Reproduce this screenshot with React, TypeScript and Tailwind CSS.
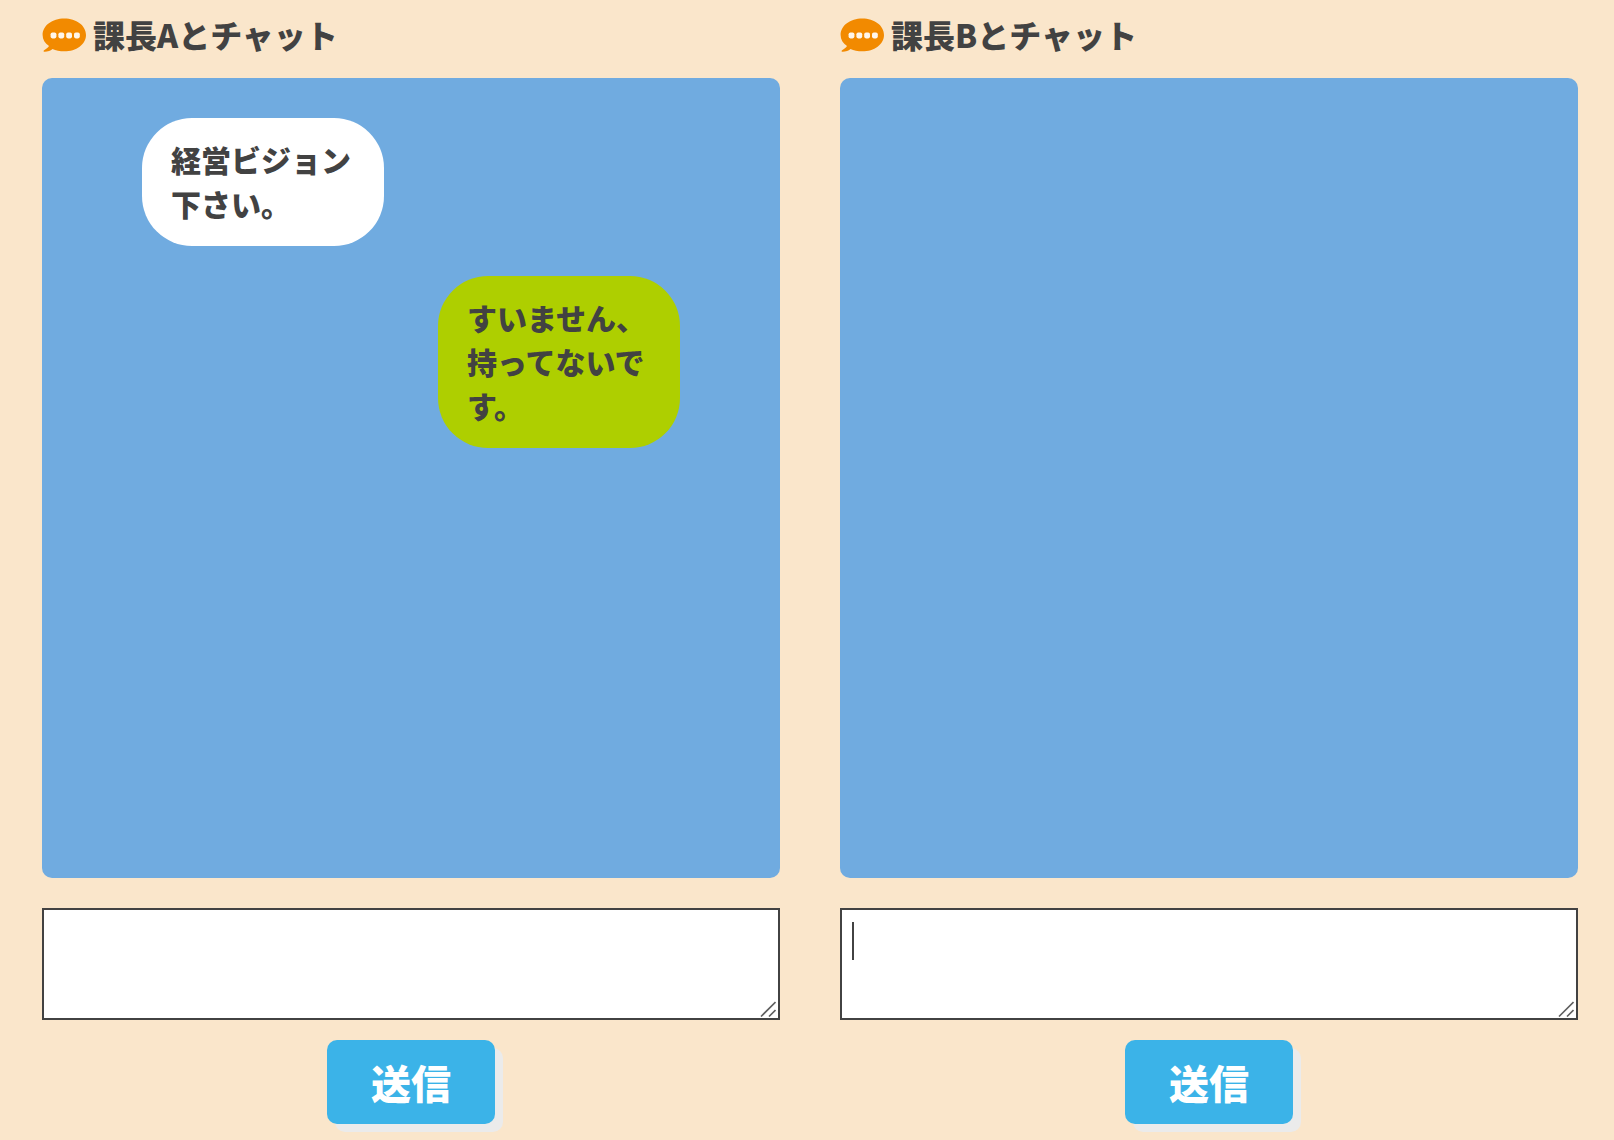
import { useState } from "react";

type Message = { from: "A" | "B"; text: string };

function SpeechIcon() {
  return (
    <svg viewBox="0 0 44 36" className="h-9 w-11 shrink-0" aria-hidden="true">
      <path
        d="M22.300 2.400C34.300 2.400 44 9.400 44 18.900S34.300 35.300 22.300 35.300c-4.400 0-8.600-.8-11.800-2.400-2 1.800-4.900 2.900-8.200 2.800-1 0-1-1-.2-1.500 2-1.100 3.900-2.500 4.900-4.200C2.900 27.300.6 23.400.6 18.900.6 9.400 10.300 2.400 22.300 2.400Z"
        fill="#f28a00"
      />
      <g fill="#fff7ec">
        <rect x="8.600" y="16.400" width="5.800" height="6" rx="1.800" />
        <rect x="16.400" y="16.400" width="5.800" height="6" rx="1.800" />
        <rect x="24.200" y="16.400" width="5.800" height="6" rx="1.800" />
        <rect x="32" y="16.400" width="5.800" height="6" rx="1.800" />
      </g>
    </svg>
  );
}

function ChatPane({
  name,
  messages,
  caret = false,
}: {
  name: "A" | "B";
  messages: Message[];
  caret?: boolean;
}) {
  const [draft, setDraft] = useState("");
  const fieldId = `message-${name}`;

  return (
    <section className="flex min-w-0 flex-1 flex-col">
      <h2 className="flex items-center gap-[7px] text-[32px] leading-[48px] font-black">
        <SpeechIcon />
        <label htmlFor={fieldId}>課長{name}とチャット</label>
      </h2>

      <div className="mt-5 flex min-h-[800px] flex-col gap-[30px] rounded-[10px] bg-[#70abe0] px-[100px] py-10">
        {messages.map((m) => (
          <p
            key={m.text}
            className={
              m.from === "A"
                ? "w-[45%] self-start rounded-[50px] bg-white px-[29px] pt-[19px] pb-[21px] text-[30px] leading-[44px] font-black"
                : "w-[45%] self-end rounded-[50px] bg-[#aecf00] px-[29px] pt-[19px] pb-[21px] text-[30px] leading-[44px] font-black"
            }
          >
            {m.text}
          </p>
        ))}
      </div>

      <div className="relative mt-[30px]">
        <textarea
          id={fieldId}
          value={draft}
          onChange={(e) => setDraft(e.target.value)}
          className="block h-28 w-full resize-none border-2 border-[#424242] bg-white px-2.5 py-2 text-[26px] leading-[44px] outline-none"
        />
        {caret && draft === "" && (
          <span className="pointer-events-none absolute top-3.5 left-3 h-[38px] w-0.5 bg-[#424242]" />
        )}
        <svg
          viewBox="0 0 16 16"
          className="pointer-events-none absolute right-1 bottom-[3px] size-4"
          fill="none"
          stroke="#606060"
          strokeWidth="1.600"
          aria-hidden="true"
        >
          <path d="M1 15.500 15.500 1M9 15.500 15.500 9" />
        </svg>
      </div>

      <button
        type="button"
        className="mt-5 self-center rounded-[10px] bg-[#3bb3e8] px-11 py-3 text-[40px] leading-[60px] font-black text-white shadow-[8px_8px_0_#ebebeb]"
      >
        送信
      </button>
    </section>
  );
}

export default function App() {
  return (
    <main className="flex min-h-screen gap-[60px] bg-[#fae6cb] pt-2.5 pr-9 pb-4 pl-[42px] font-['Noto_Sans_CJK_JP',sans-serif] text-[#424242]">
      <ChatPane
        name="A"
        messages={[
          { from: "A", text: "経営ビジョン下さい。" },
          { from: "B", text: "すいません、持ってないです。" },
        ]}
      />
      <ChatPane name="B" messages={[]} caret />
    </main>
  );
}
